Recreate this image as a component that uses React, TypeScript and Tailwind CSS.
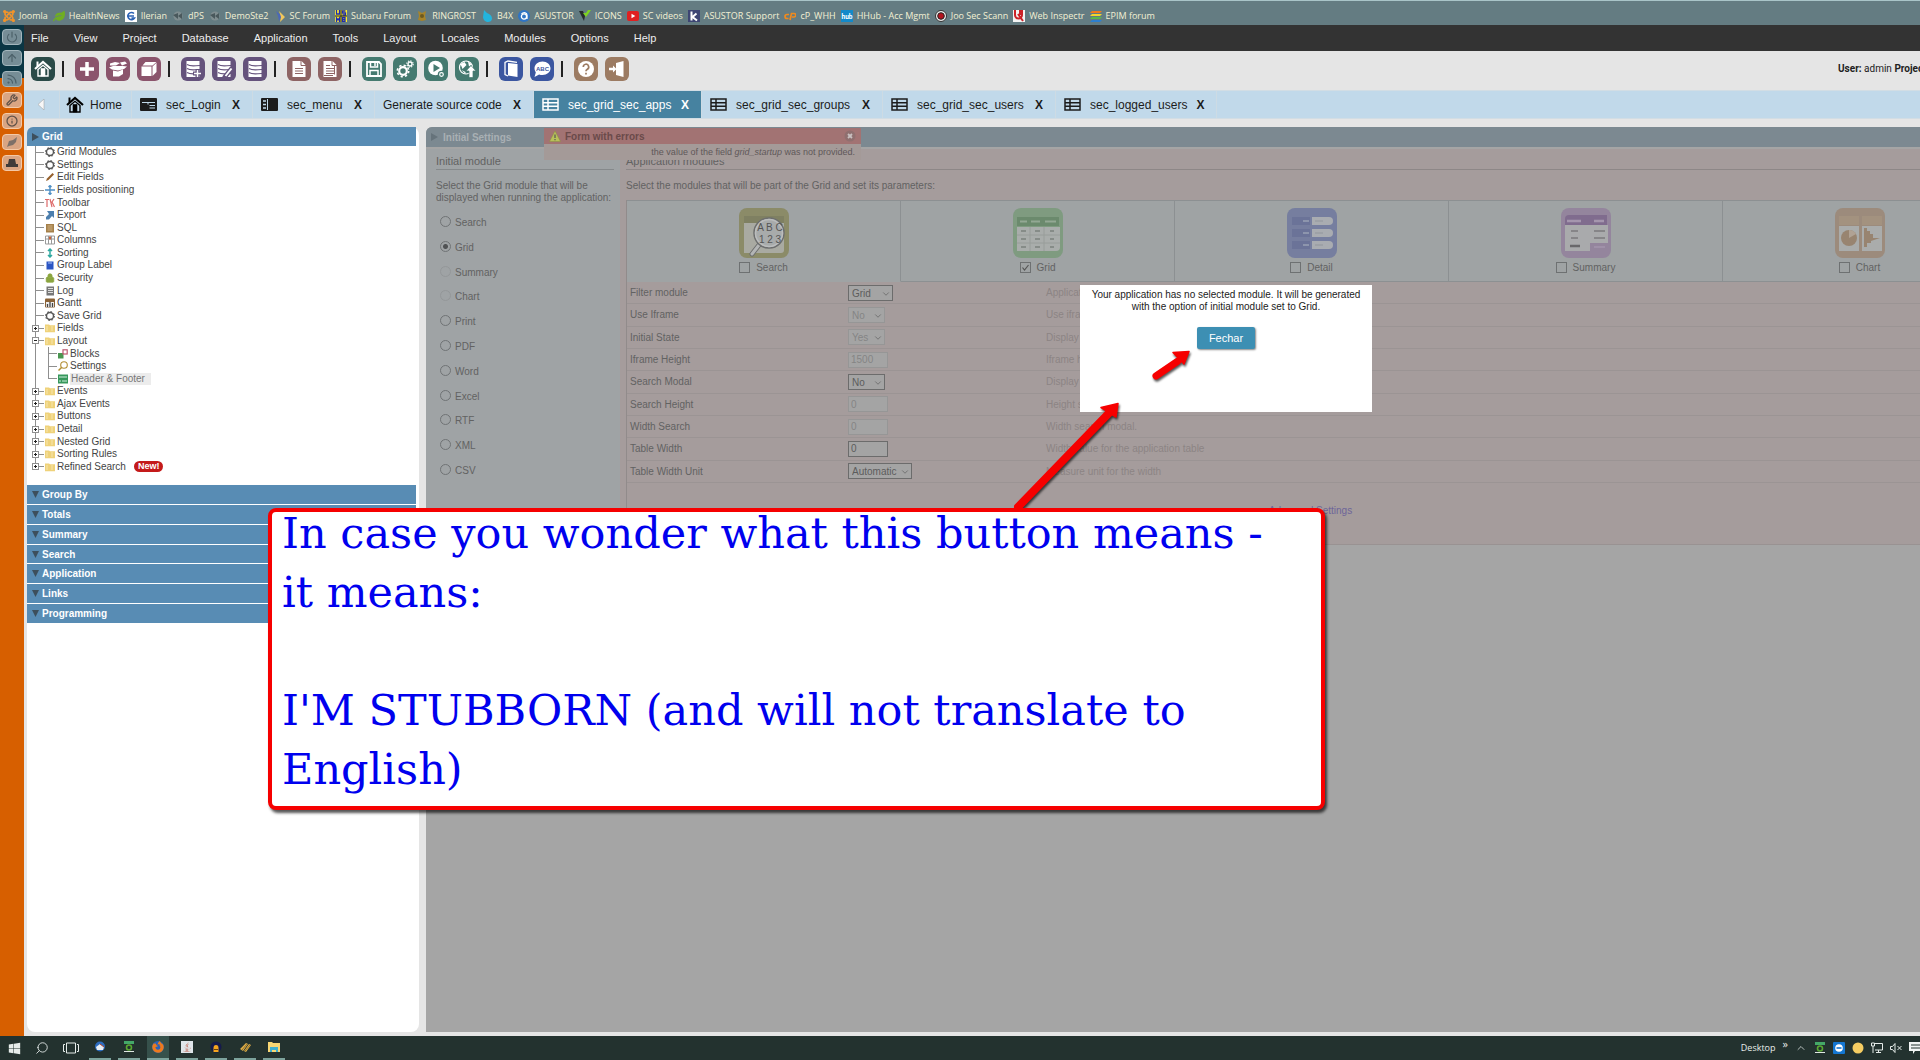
import React from 'react';
import { ChevronDown, ChevronUp, Search, Wrench, Rss, Info, Power, ArrowUp, Lock } from 'lucide-react';
import { SiJoomla } from 'react-icons/si';
import { FaFirefoxBrowser, FaWindows, FaLeaf, FaJava } from 'react-icons/fa';

interface IconProps {
  name: string;
}

// ---------- bookmarks ----------

const bookmarks = [
  'Joomla', 'HealthNews', 'Ilerian', 'dPS', 'DemoSte2', 'SC Forum', 'Subaru Forum', 'RINGROST', 'B4X', 'ASUSTOR',
  'ICONS', 'SC videos', 'ASUSTOR Support', 'cP_WHH', 'HHub - Acc Mgmt', 'Joo Sec Scann', 'Web Inspectr', 'EPIM forum',
];

const Favicon: React.FC<IconProps> = ({ name }) => {
  if (name === 'Joomla') return <SiJoomla className="size-3 text-[#f0932b]" />;
  if (name === 'HealthNews') return <FaLeaf className="size-3 text-[#6fae22]" />;
  return (
    <svg viewBox="0 0 12 12" className="size-3">
      {name === 'Ilerian' && (
        <>
          <rect width="12" height="12" fill="#fff" />
          <path d="M9 3.5A3.6 3.6 0 1 0 9.5 8H6.5M2 6h7" fill="none" stroke="#2c63b5" strokeWidth="1.6" />
        </>
      )}
      {(name === 'dPS' || name === 'DemoSte2') && (
        <>
          <circle cx="6" cy="6" r="4.6" fill="#7f8d90" />
          <path d="M1 5l5-2v6zM6 6l4-3v6z" fill="#49585c" />
        </>
      )}
      {name === 'SC Forum' && (
        <>
          <path d="M2 1l6 5-3 5-1-5z" fill="#4b68b8" />
          <path d="M5 1l6 6-5 5 1-5z" fill="#f1c75b" />
        </>
      )}
      {name === 'Subaru Forum' && (
        <>
          <rect width="12" height="12" fill="#ffee2e" />
          <path d="M1.5 0v4h3V0M10.5 1h-3v2h3v2h-3M1.5 12V8L3 10l1.500-2v4M7.500 7.500H10v4H7.500zM7.500 9.500h3" fill="none" stroke="#1d2bb0" strokeWidth="1.300" />
          <path d="M6 0v12M0 6h12" stroke="#222" strokeWidth="1" />
        </>
      )}
      {name === 'RINGROST' && (
        <>
          <path d="M2 1l4 2 4-2-1 5 1 4-4 1-4-1 1-4z" fill="#a7842a" />
          <circle cx="6" cy="6" r="2" fill="#6c5a20" />
        </>
      )}
      {name === 'B4X' && <path d="M3 0l3 3c3 1 5 3 5 5.500S9 12 7 12 2 10 2 7z" fill="#23b4dd" />}
      {name === 'ASUSTOR' && (
        <>
          <circle cx="6" cy="6" r="6" fill="#2f74c4" />
          <circle cx="6" cy="6.500" r="2.600" fill="none" stroke="#fff" strokeWidth="1.300" />
          <path d="M3.500 4C6 1.500 9 3 9 5v4" fill="none" stroke="#fff" strokeWidth="1.200" />
        </>
      )}
      {name === 'ICONS' && (
        <>
          <path d="M0 1h4l2 5-1 5z" fill="#262b2b" />
          <path d="M4 3l3 4 5-7H9L7 3z" fill="#7ed321" />
          <path d="M4 12l3-4 3-4z" fill="#222" />
        </>
      )}
      {name === 'SC videos' && (
        <>
          <rect y="1" width="12" height="10" rx="2" fill="#e02020" />
          <path d="M4.500 3.800L8.300 6 4.500 8.200z" fill="#fff" />
        </>
      )}
      {name === 'ASUSTOR Support' && (
        <>
          <rect width="12" height="12" fill="#3d4573" />
          <path d="M3.500 1.500v9M8.500 3.500L4.500 7l4.500 3.500" fill="none" stroke="#fff" strokeWidth="2" />
        </>
      )}
      {name === 'cP_WHH' && (
        <path d="M5 4.500H3a2 2 0 0 0 0 4h1.500M6 10l1.500-6.500H10a1.600 1.600 0 0 1 0 3.500H8" fill="none" stroke="#f08a1d" strokeWidth="1.700" />
      )}
      {name === 'HHub - Acc Mgmt' && (
        <>
          <rect width="12" height="12" fill="#1389c9" />
          <text x="6" y="8.500" textAnchor="middle" fontSize="6.500" fontWeight="bold" fill="#fff" fontFamily="Roboto, sans-serif">hub</text>
        </>
      )}
      {name === 'Joo Sec Scann' && (
        <>
          <circle cx="6" cy="6" r="5.500" fill="#eee" stroke="#333" />
          <circle cx="6" cy="6" r="3.300" fill="#b3121d" stroke="#222" />
        </>
      )}
      {name === 'Web Inspectr' && (
        <>
          <rect width="12" height="12" fill="#f3f3f3" />
          <path d="M2 0v5a3.500 3.500 0 0 0 7 0V0H7v5M5 4l5 7" fill="none" stroke="#cc2127" strokeWidth="2" />
        </>
      )}
      {name === 'EPIM forum' && (
        <>
          <path d="M2 1h10l-2 2H0z" fill="#f27a1a" />
          <path d="M2 4h10l-2 2H0z" fill="#f3d52e" />
          <path d="M2 7h10l-2 2H0z" fill="#59b947" />
          <path d="M2 10h10l-2 2H0z" fill="#2d7fd0" />
        </>
      )}
    </svg>
  );
};

// ---------- main menu and toolbar ----------

const menuItems = ['File', 'View', 'Project', 'Database', 'Application', 'Tools', 'Layout', 'Locales', 'Modules', 'Options', 'Help'];

const toolGroups = [
  { color: 'bg-[#2a4a48]', tools: ['home'] },
  { color: 'bg-[#8b546c]', tools: ['plus', 'openbox', 'box'] },
  { color: 'bg-[#65527c]', tools: ['formadd', 'formedit', 'form'] },
  { color: 'bg-[#8e6464]', tools: ['doc', 'docs'] },
  { color: 'bg-[#457a70]', tools: ['save', 'gears', 'run', 'deploy'] },
  { color: 'bg-[#3b56a0]', tools: ['book', 'abc'] },
  { color: 'bg-[#9c7b62]', tools: ['help', 'exit'] },
];

const House: React.FC<{ className: string }> = ({ className }) => (
  <svg viewBox="0 0 18 18" className={className} fill="none" stroke="currentColor">
    <path d="M1 9l8-7 8 7" strokeWidth="2.200" />
    <path d="M3.500 1.500v5" strokeWidth="2" />
    <path d="M4 9.500V16h10V9.500L9 5.300z" strokeWidth="1.400" />
    <path d="M7 8.500h4V16H7z" fill="currentColor" strokeWidth="0.600" />
  </svg>
);

const ToolIcon: React.FC<IconProps> = ({ name }) => {
  if (name === 'home') return <House className="size-[18px]" />;
  return (
    <svg viewBox="0 0 18 18" className="size-[18px]" fill="none" stroke="currentColor" strokeWidth="1.500">
      {name === 'plus' && <path d="M9 2v14M2 9h14" strokeWidth="3.500" />}
      {name === 'openbox' && (
        <path d="M4 10.500l5 1 5-2V14l-4 2.500H4zM1 3.500L6 2l5 1-4 2.500H1zM11 2.500l5-1 2 2-5 2zM0 7.500L4 6h10l4 .5-3 2.500-6 1.500L3 9.500z" fill="currentColor" stroke="none" />
      )}
      {name === 'box' && (
        <path d="M1.500 6.500h10V16h-10zM2.500 5.500l3-3.500h11l-4 3.500zM12.500 6.500l4-3.800V12l-4 4z" fill="currentColor" stroke="none" />
      )}
      {(name === 'form' || name === 'formadd' || name === 'formedit') && (
        <>
          <path d="M2.500 1h13v16h-13z" fill="currentColor" stroke="none" />
          <path d="M3 4.500c4 2.500 8 1 13 1M3 8.500c4 2.500 8 1 13 1M3 12.500c4 2.500 8 1 13 1" stroke="#65527c" strokeWidth="1.200" />
          {name === 'formadd' && <path d="M13.500 9v9M9 13.500h9" stroke="#65527c" strokeWidth="4" />}
          {name === 'formadd' && <path d="M13.500 10v7M10 13.500h7" strokeWidth="1.500" />}
          {name === 'formedit' && <path d="M9 18l8-10" stroke="#65527c" strokeWidth="4.500" />}
          {name === 'formedit' && <path d="M10.500 16l6-7.500" strokeWidth="2" />}
        </>
      )}
      {(name === 'doc' || name === 'docs') && (
        <>
          <path d="M2.500 1h9l4 4v12h-13z" fill="currentColor" stroke="none" />
          <path d="M11 1v4.500h5M5 8.500h8M5 11h8M5 13.500h8" stroke="#8e6464" strokeWidth="1" />
          {name === 'docs' && <path d="M5 5.500h4M13.500 5.500v9M3 15.500h9" stroke="#8e6464" strokeWidth="1" />}
        </>
      )}
      {name === 'save' && (
        <>
          <path d="M2 2h12l2 2v12H2z" strokeWidth="1.800" />
          <path d="M5.500 3v4h7V3M5 15.500v-5h8v5M10 3v3" />
        </>
      )}
      {name === 'gears' && (
        <>
          <circle cx="7" cy="11" r="3.800" strokeWidth="2.200" />
          <circle cx="7" cy="11" r="5.700" strokeWidth="1.600" strokeDasharray="2.200 2.270" />
          <circle cx="14" cy="4" r="2" strokeWidth="1.300" />
          <circle cx="14" cy="4" r="3.200" strokeWidth="1.100" strokeDasharray="1.250 1.260" />
        </>
      )}
      {name === 'run' && (
        <>
          <circle cx="8.500" cy="8" r="7.300" fill="currentColor" stroke="none" />
          <path d="M6.500 4l6.500 4-6.500 4z" fill="#457a70" stroke="none" />
          <circle cx="14.500" cy="14.500" r="3" stroke="#457a70" fill="#457a70" />
          <circle cx="14.500" cy="14.500" r="1.800" strokeWidth="1.200" />
        </>
      )}
      {name === 'deploy' && (
        <>
          <circle cx="8" cy="7.500" r="6.500" strokeWidth="1.200" />
          <path d="M2.500 4l4-2 2 3-4 4zM10 1.500l4 3-3 2zM3.500 10l4 2v2z" fill="currentColor" stroke="none" />
          <path d="M13 5.500l5 5.500h-3v6.500h-4V11H8z" fill="currentColor" stroke="#457a70" strokeWidth="0.700" />
        </>
      )}
      {name === 'book' && (
        <>
          <path d="M6 3l9.500 1v13L6 15.500z" fill="currentColor" stroke="none" />
          <path d="M15 2.300L6 1 3 2.500v12L6 16" strokeWidth="1.300" />
        </>
      )}
      {name === 'abc' && (
        <>
          <path d="M9.500 1.500c4.500 0 8 3 8 6.800s-3.500 6.700-8 6.700c-1.200 0-2.400-.2-3.400-.6L1.500 17l1.300-4.600a6 6 0 0 1-1.300-4.100c0-3.800 3.500-6.800 8-6.800z" fill="currentColor" stroke="none" />
          <text x="9.500" y="10.500" textAnchor="middle" fontSize="6" fontWeight="bold" fill="#3b56a0" stroke="none" fontFamily="Liberation Sans, sans-serif">ABC</text>
        </>
      )}
      {name === 'help' && (
        <>
          <circle cx="9" cy="9" r="8" fill="currentColor" stroke="none" />
          <path d="M6.300 7a2.700 2.700 0 1 1 3.800 2.400c-.8.400-1.100.9-1.100 1.800M9 12.800v1.800" stroke="#9c7b62" strokeWidth="1.700" />
        </>
      )}
      {name === 'exit' && (
        <>
          <path d="M8 3l7.500-2v16L8 15z" fill="currentColor" stroke="none" />
          <path d="M1 7.700h4V5.500L8.500 9 5 12.500v-2.200H1z" fill="currentColor" stroke="none" />
        </>
      )}
    </svg>
  );
};

// ---------- tabs ----------

const tabs = [
  { label: 'sec_Login', icon: 'form', width: 'w-[121px]' },
  { label: 'sec_menu', icon: 'menu', width: 'w-[122px]' },
  { label: 'Generate source code', icon: '', width: 'w-[159px]' },
  { label: 'sec_grid_sec_apps', icon: 'grid', width: 'w-[168px]' },
  { label: 'sec_grid_sec_groups', icon: 'grid', width: 'w-[181px]' },
  { label: 'sec_grid_sec_users', icon: 'grid', width: 'w-[173px]' },
  { label: 'sec_logged_users', icon: 'grid', width: 'w-[161px]' },
];

const TabIcon: React.FC<IconProps> = ({ name }) => (
  <svg viewBox="0 0 17 13" className="h-[13px] w-[17px] shrink-0" fill="none" stroke="currentColor">
    {name === 'grid' && (
      <>
        <rect x="1" y="1" width="15" height="11" strokeWidth="1.500" />
        <path d="M6 1v11M1 4.700h15M1 8.300h15" strokeWidth="1.500" />
      </>
    )}
    {name === 'form' && (
      <>
        <rect width="17" height="13" rx="1" fill="currentColor" stroke="none" />
        <path d="M2 4.500h13M9.500 7.500H15M9.500 10H15" stroke="#c1d9ea" strokeWidth="1.200" />
        <path d="M2 4.500h6v2" stroke="#c1d9ea" />
      </>
    )}
    {name === 'menu' && (
      <>
        <rect width="17" height="13" rx="1" fill="currentColor" stroke="none" />
        <path d="M2 3h3M2 6.500h3M2 10h3" stroke="#c1d9ea" strokeWidth="1.600" />
        <path d="M6.500 1v11" stroke="#c1d9ea" />
      </>
    )}
  </svg>
);

// ---------- sidebar ----------

const tree = [
  { label: 'Grid Modules', icon: 'gear' },
  { label: 'Settings', icon: 'gear' },
  { label: 'Edit Fields', icon: 'pencil' },
  { label: 'Fields positioning', icon: 'move' },
  { label: 'Toolbar', icon: 'tools' },
  { label: 'Export', icon: 'export' },
  { label: 'SQL', icon: 'sql' },
  { label: 'Columns', icon: 'columns' },
  { label: 'Sorting', icon: 'sort' },
  { label: 'Group Label', icon: 'label' },
  { label: 'Security', icon: 'lock' },
  { label: 'Log', icon: 'log' },
  { label: 'Gantt', icon: 'gantt' },
  { label: 'Save Grid', icon: 'gear' },
  { label: 'Fields', icon: 'folder', node: 'plus' },
  { label: 'Layout', icon: 'folder', node: 'minus' },
  { label: 'Blocks', icon: 'blocks', child: true },
  { label: 'Settings', icon: 'loupe', child: true },
  { label: 'Header & Footer', icon: 'header', child: true, active: true },
  { label: 'Events', icon: 'folder', node: 'plus' },
  { label: 'Ajax Events', icon: 'folder', node: 'plus' },
  { label: 'Buttons', icon: 'folder', node: 'plus' },
  { label: 'Detail', icon: 'folder', node: 'plus' },
  { label: 'Nested Grid', icon: 'folder', node: 'plus' },
  { label: 'Sorting Rules', icon: 'folder', node: 'plus' },
  { label: 'Refined Search', icon: 'folder', node: 'plus', isNew: true, last: true },
];

const sections = ['Group By', 'Totals', 'Summary', 'Search', 'Application', 'Links', 'Programming'];

const TreeIcon: React.FC<IconProps> = ({ name }) => {
  if (name === 'lock') return <Lock className="size-2.5 shrink-0 fill-[#8ba53f] text-[#8ba53f]" />;
  return (
    <svg viewBox="0 0 10 10" className="size-2.5 shrink-0" fill="none">
      {name === 'gear' && (
        <>
          <circle cx="5" cy="5" r="3.500" stroke="#555" strokeWidth="1.400" />
          <circle cx="5" cy="5" r="4.500" stroke="#555" strokeWidth="1" strokeDasharray="1.700 1.830" />
        </>
      )}
      {name === 'pencil' && <path d="M1 9l1-2.500L7.500 1 9 2.500 3.500 8z" fill="#96602c" />}
      {name === 'move' && <path d="M5 0v10M0 5h10M3.500 2L5 .5 6.500 2M3.500 8L5 9.500 6.500 8" stroke="#4f8fc4" strokeWidth="1.400" />}
      {name === 'tools' && <path d="M0 1.500h4M2 1v8M5 1l2 8M9 1L7 4l2.500 5" stroke="#dd6a6a" strokeWidth="1.200" />}
      {name === 'export' && <path d="M2 1h7v7L7 6 4 9.500H1V7l3-3z" fill="#4c7fae" />}
      {name === 'sql' && (
        <>
          <path d="M1 1h8v8.500H1z" fill="#a5804a" />
          <path d="M2.500 3h5M2.500 5h5M2.500 7h5" stroke="#d0b284" />
        </>
      )}
      {name === 'columns' && (
        <>
          <path d="M.5 1h9v8h-9zM3.500 1v8M6.500 1v8M.5 4h9" stroke="#999" />
          <path d="M4 1.500h2v3H4z" fill="#c9623a" />
        </>
      )}
      {name === 'sort' && <path d="M5 1v8M3 3l2-2 2 2M3 7l2 2 2-2" stroke="#2fa8a0" strokeWidth="1.500" />}
      {name === 'label' && (
        <>
          <rect x="1.500" y="1.500" width="7" height="8" fill="#2c56c4" />
          <path d="M3 3h4" stroke="#a9c0f5" />
        </>
      )}
      {name === 'log' && (
        <>
          <rect x="1.500" y="0.500" width="7.500" height="9" fill="#777" />
          <path d="M3 2.500h5M3 4.500h5M3 6.500h5" stroke="#ddd" />
        </>
      )}
      {name === 'gantt' && (
        <>
          <rect y="0.500" width="10" height="9" rx="1" fill="#8a6237" />
          <path d="M1 4h8v5H1z" fill="#eee" />
          <path d="M2.500 9V6M5 9V4M7.500 9V5" stroke="#444" strokeWidth="1.300" />
        </>
      )}
      {name === 'folder' && (
        <>
          <path d="M0 1.500h4l1 .7h5v7H0z" fill="#efd27a" />
          <path d="M2 3v5M7 3v5" stroke="#f7e6ae" />
        </>
      )}
      {name === 'blocks' && (
        <>
          <rect x="0" y="4" width="5.500" height="5.500" fill="#4a9650" />
          <rect x="5" y="0.800" width="4.200" height="4.200" stroke="#bf5a72" strokeWidth="1.200" />
        </>
      )}
      {name === 'loupe' && (
        <>
          <circle cx="6" cy="4" r="3.300" stroke="#b38f35" strokeWidth="1.100" />
          <path d="M3.500 6.500L.5 9.500" stroke="#b38f35" strokeWidth="1.500" />
        </>
      )}
      {name === 'header' && (
        <>
          <rect y="0.500" width="10" height="9" fill="#36985c" />
          <path d="M1 3h8M1 7h2M4 7h5" stroke="#cfeedd" />
        </>
      )}
    </svg>
  );
};

const Branch: React.FC<{ node?: string; last?: boolean; bare?: boolean }> = ({ node, last, bare }) => (
  <svg viewBox="0 0 12 13" className="h-[13px] w-3 shrink-0" fill="none" stroke="#8f8f8f">
    <path d={last ? 'M3.500 0v7' : 'M3.500 0v13'} />
    {!bare && <path d="M3.500 6.500H12" />}
    {node && <rect x="0.500" y="3.500" width="6" height="6" fill="#fff" />}
    {node && <path d={node === 'plus' ? 'M2 6.500h3M3.500 5v3' : 'M2 6.500h3'} stroke="#222" />}
  </svg>
);

const Sidebar = () => (
  <aside className="flex w-[392px] shrink-0 flex-col rounded-lg bg-white pr-[3px] text-[10px] text-[#444]">
    <h2 className="flex h-[19px] shrink-0 items-center gap-[3px] rounded-tl-md bg-[#588cb4] pl-[5px] font-bold text-white">
      <svg viewBox="0 0 7 8" className="h-2 w-[7px]"><path d="M0 0l7 4-7 4z" fill="#3d4f5c" /></svg>
      Grid
    </h2>
    <ul className="flex h-[327px] flex-col">
      {tree.map((item, index) => (
        <li key={index} className="flex min-h-0 flex-1 items-center pl-[5px] leading-3">
          <Branch node={item.node} last={item.last} bare={item.child} />
          {item.child && <span className="w-px" />}
          {item.child && <Branch last={item.active} />}
          <span className="w-px" />
          <TreeIcon name={item.icon} />
          <a href="#" className={item.active ? 'ml-0.5 bg-[#ececec] pr-1.5 pl-px text-[#777]' : 'ml-0.5'}>{item.label}</a>
          {item.isNew && (
            <span className="ml-2 rounded-full bg-[#c41a1a] px-1 text-[9px] leading-[11px] font-bold text-white">New!</span>
          )}
        </li>
      ))}
    </ul>
    <div className="mt-3 flex h-[138px] flex-col gap-px">
      {sections.map((section) => (
        <button key={section} className="flex flex-1 items-center gap-[3px] bg-[#588cb4] pl-[5px] font-bold text-white">
          <svg viewBox="0 0 7 7" className="size-[7px]"><path d="M0 0h7L3.500 7z" fill="#3d4f5c" /></svg>
          {section}
        </button>
      ))}
    </div>
  </aside>
);

// ---------- settings form ----------

const startModules = [
  { label: 'Search' }, { label: 'Grid' }, { label: 'Summary', disabled: true }, { label: 'Chart', disabled: true }, { label: 'Print' },
  { label: 'PDF' }, { label: 'Word' }, { label: 'Excel' }, { label: 'RTF' }, { label: 'XML' }, { label: 'CSV' },
];

const appModules = ['Search', 'Grid', 'Detail', 'Summary', 'Chart'];

const fields = [
  { label: 'Filter module', type: 'select', value: 'Grid', width: 'w-[45px]', hint: 'Application module used by the filter' },
  { label: 'Use Iframe', type: 'select', value: 'No', width: 'w-[37px]', disabled: true, hint: 'Use iframe' },
  { label: 'Initial State', type: 'select', value: 'Yes', width: 'w-[37px]', disabled: true, hint: 'Display' },
  { label: 'Iframe Height', type: 'text', value: '1500', width: 'w-10', disabled: true, hint: 'Iframe height' },
  { label: 'Search Modal', type: 'select', value: 'No', width: 'w-[37px]', hint: 'Display' },
  { label: 'Search Height', type: 'text', value: '0', width: 'w-10', disabled: true, hint: 'Height search' },
  { label: 'Width Search', type: 'text', value: '0', width: 'w-10', disabled: true, hint: 'Width search modal.' },
  { label: 'Table Width', type: 'text', value: '0', width: 'w-10', hint: 'Width value for the application table' },
  { label: 'Table Width Unit', type: 'select', value: 'Automatic', width: 'w-16', hint: 'Measure unit for the width' },
];

const ModuleIcon: React.FC<IconProps> = ({ name }) => (
  <svg viewBox="0 0 50 50" className="size-[50px]" fill="none">
    {name === 'Search' && (
      <>
        <rect width="50" height="50" rx="8" fill="#8b8b68" />
        <path d="M5 8h40v34a3 3 0 0 1-3 3H5z" fill="#a9aaa2" />
        <path d="M5 8h40v7H5z" fill="#7f8062" />
        <path d="M20 37l-7 9" stroke="#6d6e6e" strokeWidth="5" strokeLinecap="round" />
        <path d="M20 37l-7 9" stroke="#b3b5b5" strokeWidth="3" strokeLinecap="round" />
        <circle cx="30" cy="25" r="15" fill="#a8abab" stroke="#6d6e6e" strokeWidth="1.500" />
        <circle cx="30" cy="25" r="13.500" stroke="#bbbdbd" strokeWidth="1.500" />
        <text x="31" y="23" textAnchor="middle" fontSize="10" fill="#555" fontFamily="Liberation Sans, sans-serif">A B C</text>
        <text x="31" y="35" textAnchor="middle" fontSize="10" fill="#555" fontFamily="Liberation Sans, sans-serif">1 2 3</text>
      </>
    )}
    {name === 'Grid' && (
      <>
        <rect width="50" height="50" rx="8" fill="#7f9b80" />
        <path d="M4 9h42v9H4z" fill="#6b8a6d" />
        <path d="M7 13.500h7M18 13.500h9M32 13.500h11" stroke="#93a894" strokeWidth="2" />
        <path d="M4 19h43v20a4 4 0 0 1-4 4H4z" fill="#a9adab" />
        <path d="M4 27h43M4 35h43M17 19v24M31 19v24" stroke="#989d9a" />
        <path d="M8 23h5M8 31h5M8 39h5M22 23h5M22 31h5M22 39h5M37 23h4M37 31h4M37 39h4" stroke="#868c88" strokeWidth="2" />
      </>
    )}
    {name === 'Detail' && (
      <>
        <rect width="50" height="50" rx="8" fill="#767e9f" />
        {[9, 21, 33].map((y) => (
          <React.Fragment key={y}>
            <rect x="5" y={y} width="18" height="8" fill="#6b7398" />
            <path d={`M16 ${y + 4}h6`} stroke="#98a0b4" strokeWidth="1.500" />
            <path d={`M25 ${y}h17a4 4 0 0 1 0 8H25z`} fill="#a9acb1" />
            <path d={`M28 ${y + 4}h8`} stroke="#92969d" />
          </React.Fragment>
        ))}
      </>
    )}
    {name === 'Summary' && (
      <>
        <rect width="50" height="50" rx="8" fill="#94859d" />
        <path d="M4 17V11a4 4 0 0 1 4-4h38v10z" fill="#806c8e" />
        <path d="M6 13h14M33 13h10" stroke="#a596ae" strokeWidth="2.500" />
        <path d="M4 17h43v18H29v8H4z" fill="#a9aaac" />
        <path d="M10 23h7M10 30h7M33 23h11M33 30h11" stroke="#868588" strokeWidth="2" />
        <path d="M9 38h10" stroke="#69686b" strokeWidth="2.500" />
        <path d="M33 39h11" stroke="#a596ae" strokeWidth="1.500" />
      </>
    )}
    {name === 'Chart' && (
      <>
        <rect width="50" height="50" rx="8" fill="#9c8b7c" />
        <path d="M4 8h20v9H4zM27 8h20v9H27z" fill="#a3927f" />
        <path d="M4 18h20v25H4zM27 18h20v25H27z" fill="#aaacab" />
        <circle cx="14" cy="30" r="8" fill="#988470" />
        <path d="M14 30v-8a8 8 0 0 1 7 4z" fill="#b0a294" />
        <path d="M29 20h3v3h3v3h3v4h7l-9 3v2h-4v4h-3z" fill="#988470" />
      </>
    )}
  </svg>
);

const FieldControl: React.FC<{ field: (typeof fields)[number] }> = ({ field }) => {
  const box = field.disabled ? 'border-[#969696] text-[#858585]' : 'border-[#6c6c6c] text-[#5c5c5c]';
  if (field.type === 'text') {
    return (
      <input id={field.label} disabled={field.disabled} defaultValue={field.value} className={`block h-4 border bg-[#a4a4a4] px-0.5 ${field.width} ${box}`} />
    );
  }
  return (
    <div className={`relative h-4 ${field.width}`}>
      <select id={field.label} disabled={field.disabled} className={`block h-4 w-full appearance-none border bg-[#a4a4a4] px-[3px] opacity-100 ${box}`}>
        <option>{field.value}</option>
      </select>
      <ChevronDown className="pointer-events-none absolute top-1 right-0.5 size-2.5 text-[#6a6a6a]" />
    </div>
  );
};

const ErrorBox = () => (
  <div className="absolute top-px left-[118px] w-[317px] bg-[#a49a98]">
    <div className="flex h-4 items-center gap-1 bg-[#a27373] px-[5px] text-[10px] font-bold text-[#6a4a4a]">
      <svg viewBox="0 0 12 12" className="size-3">
        <path d="M6 1l5.500 10.500H.5z" fill="#b8c05a" stroke="#8b9040" strokeWidth="0.500" />
        <path d="M6 4.500v3.500M6 9v1.300" stroke="#555" strokeWidth="1.200" />
      </svg>
      Form with errors
      <button aria-label="Close" className="ml-auto">
        <svg viewBox="0 0 12 12" className="size-3">
          <circle cx="6" cy="6" r="5.500" fill="#8f6f6f" />
          <path d="M4 4l4 4M8 4L4 8" stroke="#c9c0c0" strokeWidth="1.800" />
        </svg>
      </button>
    </div>
    <p className="h-4 pr-1.5 text-right text-[9px] leading-4 text-[#5f5858]">
      the value of the field <i>grid_startup</i> was not provided.
    </p>
  </div>
);

const SettingsPanel = () => (
  <main className="relative min-w-0 flex-1 overflow-hidden rounded-tl-md bg-[#a5a5a5] text-[10px] text-[#626262]">
    <h2 className="flex h-5 items-center gap-[5px] bg-[#7c8991] pl-[5px] font-bold text-[#a9b0b4]">
      <svg viewBox="0 0 7 8" className="h-2 w-[7px]"><path d="M0 0l7 4-7 4z" fill="#66737b" /></svg>
      Initial Settings
    </h2>
    <div className="flex border-b border-[#999292] pt-0.5">
      <section className="w-[194px] shrink-0 bg-[#9fa3a5] px-2.5">
        <h3 className="mr-[-4px] h-[21px] border-b border-[#85898b] pt-1 text-[11px] leading-4">Initial module</h3>
        <p className="mt-2.5 mr-[-8px] leading-3">Select the Grid module that will be displayed when running the application:</p>
        <div className="mt-1.5 flex h-[273px] flex-col">
          {startModules.map((module) => (
            <label key={module.label} className="flex flex-1 items-center gap-1 pl-1">
              <input
                type="radio"
                name="start"
                disabled={module.disabled}
                defaultChecked={module.label === 'Grid'}
                className="mb-0.5 size-[11px] appearance-none rounded-full border border-[#707375] checked:bg-[radial-gradient(circle,#505254_0_2px,transparent_3px)] disabled:border-[#949799]"
              />
              {module.label}
            </label>
          ))}
        </div>
      </section>
      <section className="h-[395px] min-w-0 flex-1 overflow-hidden bg-[#a59c9c] pl-1.5">
        <h3 className="h-[21px] border-b border-[#8d8787] pt-1 text-[11px] leading-4">Application modules</h3>
        <p className="mt-2.5 leading-3">Select the modules that will be part of the Grid and set its parameters:</p>
        <div className="mt-2 w-[1372px] border-l border-[#918b8b]">
          <div className="flex h-[82px] border-t border-[#8c9092]">
            {appModules.map((name) => (
              <div
                key={name}
                className={`flex w-[274px] shrink-0 flex-col items-center border-r border-b border-r-[#8c9092] bg-[#9fa3a4] pt-[7px] ${name === 'Search' ? 'border-b-[#9fa3a4]' : 'border-b-[#8c9092]'}`}
              >
                <ModuleIcon name={name} />
                <label className="flex items-center gap-1.5 pt-0.5">
                  <span className="relative">
                    <input type="checkbox" defaultChecked={name === 'Grid'} className="peer block size-[11px] appearance-none border border-[#6e7172]" />
                    <svg viewBox="0 0 11 11" className="pointer-events-none absolute top-0 left-0 hidden size-[11px] peer-checked:block">
                      <path d="M2.500 5.500l2 2.500 4-5" fill="none" stroke="#555" strokeWidth="1.200" />
                    </svg>
                  </span>
                  {name}
                </label>
              </div>
            ))}
          </div>
          <table className="h-[201px] w-full border-collapse">
            <tbody>
              {fields.map((field) => (
                <tr key={field.label} className="border-b border-[#9b9494]">
                  <td className="w-[221px] p-0 pl-[3px]"><label htmlFor={field.label}>{field.label}</label></td>
                  <td className="w-[198px] p-0"><FieldControl field={field} /></td>
                  <td className="p-0 text-[#8c8484]">{field.hint}</td>
                </tr>
              ))}
            </tbody>
          </table>
          <p className="mt-5 pr-1 text-center"><a href="#" className="text-[#6d6599]">Advanced Settings</a></p>
        </div>
      </section>
    </div>
    <ErrorBox />
  </main>
);

// ---------- dock and taskbar ----------

const dockIcons = [Power, ArrowUp, Rss, Wrench, Info];

const Dock = () => (
  <nav className="flex w-6 shrink-0 flex-col items-center gap-[5px] bg-linear-to-b from-[#0b3644] from-[53px] to-[#d75f00] to-[53px] pt-1">
    {dockIcons.map((Icon, index) => (
      <button key={index} className={`flex h-4 w-5 items-center justify-center rounded-sm border ${index < 3 ? 'border-[#a3b6bd] bg-[#768d96] text-[#4d626b]' : 'border-[#f5c9a6] bg-[#d9a583] text-[#5f5148]'}`}>
        <Icon className="size-3" strokeWidth={2.5} />
      </button>
    ))}
    <button className="flex h-4 w-5 items-center justify-center rounded-sm border border-[#f5c9a6] bg-[#d9a583]">
      <svg viewBox="0 0 12 12" className="size-3"><path d="M1 11l2-6 4-1 4-3-1 5-3 3-4 1z" fill="#7d7068" /></svg>
    </button>
    <button className="flex h-4 w-5 items-center justify-center rounded-sm border border-[#f5c9a6] bg-[#d9a583]">
      <svg viewBox="0 0 12 12" className="size-3"><path d="M3 2h6l1 5h2v3H0V7h2z" fill="#3f3b3a" /></svg>
    </button>
  </nav>
);

const taskItems = ['thunderbird', 'green', 'firefox', 'java', 'mask', 'feather', 'explorer'];

const TaskIcon: React.FC<IconProps> = ({ name }) => {
  if (name === 'firefox') {
    return (
      <span className="flex size-3 items-center justify-center rounded-full bg-[#2a62b8]">
        <FaFirefoxBrowser className="size-3 text-[#ee7a1c]" />
      </span>
    );
  }
  if (name === 'java') return <span className="bg-[#dfe6ea] p-px"><FaJava className="size-2.5 text-[#bb5540]" /></span>;
  return (
    <svg viewBox="0 0 12 12" className="size-3" fill="none">
      {name === 'thunderbird' && (
        <>
          <circle cx="6" cy="5.500" r="5" fill="#2c6cc0" />
          <path d="M2 6l4-3 4 3-1 3H3z" fill="#e8eef4" />
          <path d="M6 3l4 3" stroke="#b4442c" />
        </>
      )}
      {name === 'green' && (
        <>
          <path d="M1 0h10v3H1z" fill="#44a868" />
          <circle cx="6" cy="6.500" r="2.500" stroke="#59a832" strokeWidth="1.600" />
          <path d="M1 10.500h10" stroke="#dfe8e2" />
        </>
      )}
      {name === 'mask' && (
        <>
          <circle cx="6" cy="6" r="5.500" fill="#151a4c" />
          <path d="M3.500 7a2.500 3 0 0 1 5 0v4h-5z" fill="#f5a51f" />
          <path d="M4 8.500h4" stroke="#6b420a" />
        </>
      )}
      {name === 'feather' && (
        <>
          <path d="M1 8l6-6 2 1-5 7zM5 10l5-7 2 1-5 7z" fill="#e0b04c" />
          <path d="M3 9l5-6M6 10l5-6" stroke="#7a5712" strokeWidth="0.700" />
        </>
      )}
      {name === 'explorer' && (
        <>
          <path d="M0 1h4l1 1h7v9H0z" fill="#f7d774" />
          <path d="M2 6h8v5H8V9H4v2H2z" fill="#3fb0cf" />
        </>
      )}
      {name === 'viewer' && (
        <>
          <rect width="12" height="12" rx="1" fill="#1477d2" />
          <circle cx="6" cy="6" r="3.800" fill="#fff" />
          <path d="M3.500 6h5" stroke="#1477d2" strokeWidth="1.600" />
        </>
      )}
      {name === 'ball' && <circle cx="6" cy="6" r="5.500" fill="#f6cd62" />}
      {name === 'network' && (
        <path d="M4 1.500h7.500v6.500H4M7.500 8v2.500M5 10.500h5M.5 1h3v3h-3zM2 4v7" stroke="#e6ecea" />
      )}
      {name === 'mute' && <path d="M.5 4.500h2L5 1.500v9L2.500 7.500h-2zM7.500 4l4 4M11.500 4l-4 4" stroke="#e6ecea" />}
      {name === 'notes' && (
        <>
          <path d="M0 0h12v9H6l-2 3V9H0z" fill="#f2f5f4" />
          <path d="M2 3h10M2 6h10" stroke="#23322f" />
        </>
      )}
    </svg>
  );
};

const Taskbar = () => (
  <footer className="flex h-6 shrink-0 items-center overflow-hidden bg-[#23322f] text-[#e6ecea]">
    <div className="flex items-center gap-[14px] pl-2">
      <FaWindows className="size-[13px]" />
      <Search className="size-[14px] -scale-x-100" strokeWidth={1.5} />
      <svg viewBox="0 0 16 12" className="h-3 w-4" fill="none" stroke="currentColor">
        <path d="M3.500 1h9v10h-9zM2 2.500H.5v7H2M14 2.500h1.500v7H14" />
      </svg>
    </div>
    <div className="flex h-full gap-[7px] pl-2.5">
      {taskItems.map((name) => (
        <button key={name} className={`flex w-[22px] items-center justify-center border-b-2 border-[#7da39c] ${name === 'firefox' ? 'bg-[#36514b]' : ''}`}>
          <TaskIcon name={name} />
        </button>
      ))}
    </div>
    <div className="mr-[-1px] ml-auto flex items-center gap-[7px] font-['Open_Sans',sans-serif] text-[9px]">
      <span>Desktop</span>
      <span className="mb-2 text-[11px] leading-3">»</span>
      <ChevronUp className="size-3" strokeWidth={1.5} />
      <TaskIcon name="green" />
      <TaskIcon name="viewer" />
      <TaskIcon name="ball" />
      <TaskIcon name="network" />
      <TaskIcon name="mute" />
      <TaskIcon name="notes" />
    </div>
  </footer>
);

// ---------- overlays ----------

const MessageDialog = () => (
  <div role="dialog" className="absolute top-[285px] left-[1080px] flex h-[127px] w-[292px] flex-col items-center bg-white px-2 pt-1 text-center text-[10px] leading-3 text-[#222]">
    <p>Your application has no selected module. It will be generated with the option of initial module set to Grid.</p>
    <button className="mt-3.5 h-[22px] w-[58px] rounded-xs bg-[#3d8fb3] text-[11px] text-white shadow-[1px_1px_2px_#888]">Fechar</button>
  </div>
);

const Annotation = () => (
  <>
    <svg viewBox="0 0 200 180" className="absolute top-[340px] left-[1010px] h-[180px] w-[200px] drop-shadow-[1px_2px_1px_#000000aa]" fill="#f60000">
      <path d="M8 167L100 72" stroke="#f60000" strokeWidth="8" strokeLinecap="round" />
      <path d="M108 63.500L91 67.500 106 77z" stroke="#f60000" strokeWidth="1.500" strokeLinejoin="round" />
      <path d="M146 36l22-15" stroke="#f60000" strokeWidth="7" strokeLinecap="round" />
      <path d="M179 11.500L163 12.500 174 24z" stroke="#f60000" strokeWidth="1.500" strokeLinejoin="round" />
    </svg>
    <div className="absolute top-[508px] left-[268px] h-[302px] w-[1057px] rounded-lg border-4 border-[#f60000] bg-white pl-2.5 font-['DejaVu_Serif',serif] text-[43px] leading-[59px] text-[#0000ee] shadow-[2px_3px_3px_#000000aa]">
      <p className="-mt-2">
        In case you wonder what this button means -<br />
        it means:<br />
        <br />
        I'M STUBBORN (and will not translate to<br />
        English)
      </p>
    </div>
  </>
);

export default function App() {
  return (
    <div className="relative flex h-screen flex-col overflow-hidden bg-[#e5e5e5] font-['Liberation_Sans',Arial,sans-serif]">
      <nav className="flex h-[25px] shrink-0 items-center gap-[5px] overflow-hidden border-t border-[#a9c4c8] bg-[#647c82] pt-1.5 pl-[3px] font-['Open_Sans',sans-serif] text-[9px] whitespace-nowrap text-[#f3f0d4]">
        {bookmarks.map((name) => (
          <a key={name} href="#" className="flex items-center gap-1">
            <Favicon name={name} />
            {name}
          </a>
        ))}
      </nav>

      <div className="flex min-h-0 flex-1">
        <Dock />
        <div className="flex min-w-0 flex-1 flex-col">
          <nav className="flex h-[26px] shrink-0 items-center gap-[25px] bg-[#333] pl-[7px] text-[11px] text-[#eee]">
            {menuItems.map((item) => (
              <a key={item} href="#">{item}</a>
            ))}
          </nav>

          <div className="flex h-[39px] shrink-0 items-center overflow-hidden pb-1 pl-[7px]">
            <div className="flex items-center gap-[7px]">
              {toolGroups.map((group, index) => (
                <React.Fragment key={index}>
                  {index > 0 && <span className="mr-1 h-4 w-0.5 bg-[#222]" />}
                  {group.tools.map((tool) => (
                    <button key={tool} aria-label={tool} className={`flex size-6 items-center justify-center rounded-md text-white ${group.color}`}>
                      <ToolIcon name={tool} />
                    </button>
                  ))}
                </React.Fragment>
              ))}
            </div>
            <p className="ml-auto w-[82px] overflow-hidden font-['Roboto',sans-serif] text-[10px] whitespace-nowrap text-[#222]">
              <b>User:</b> admin <b>Project:</b>
            </p>
          </div>

          <div className="flex h-[29px] shrink-0 items-stretch border-y border-[#d2dde4] bg-[#c1d9ea] text-[12px] text-[#1c1c1c]">
            <button aria-label="Scroll tabs left" className="flex w-9 items-center justify-center border-r border-[#cddbe4]">
              <svg viewBox="0 0 7 11" className="h-[11px] w-[7px]"><path d="M6 0v11L0 5.500z" fill="#f7f7f7" stroke="#999" strokeWidth="0.500" /></svg>
            </button>
            <a href="#" className="flex w-[72px] items-center gap-1.5 border-r border-[#cddbe4] pl-1.5">
              <House className="size-[18px] shrink-0 text-black" />
              Home
            </a>
            {tabs.map((tab) => (
              <div
                key={tab.label}
                className={`flex shrink-0 items-center gap-[9px] border-r border-[#cddbe4] pr-3 pl-2 ${tab.width} ${tab.label === 'sec_grid_sec_apps' ? 'bg-[#4682a0] text-white' : ''}`}
              >
                {tab.icon && <TabIcon name={tab.icon} />}
                <a href="#" className="whitespace-nowrap">{tab.label}</a>
                <button className="ml-auto font-bold">X</button>
              </div>
            ))}
          </div>

          <div className="flex min-h-0 flex-1 gap-[7px] pt-2 pb-1 pl-[3px]">
            <Sidebar />
            <SettingsPanel />
          </div>
        </div>
      </div>

      <Taskbar />
      <MessageDialog />
      <Annotation />
    </div>
  );
}
